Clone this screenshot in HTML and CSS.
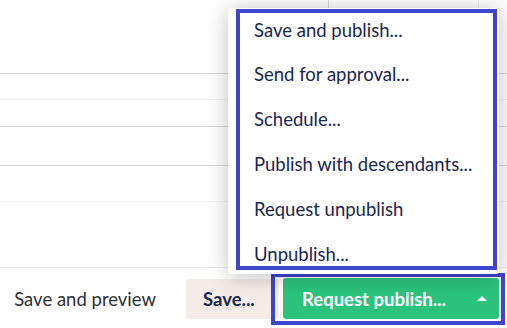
FILE: index.html
```html
<!DOCTYPE html>
<html lang="en">

<head>
    <meta charset="UTF-8">
    <meta name="viewport" content="width=device-width, initial-scale=1.0">
    <title>Publish options</title>
    <link rel="stylesheet" href="styles.css">
</head>

<body>
    <div class="page">
        <div class="content">
            <div class="row row-head">
                <div class="cell"></div>
                <div class="cell cell-mid"></div>
                <div class="cell cell-end"></div>
            </div>
            <div class="row row-a"></div>
            <div class="row row-b light"></div>
            <div class="row row-c"></div>
            <div class="row row-d"></div>
            <div class="row row-e light"></div>
        </div>

        <div class="footer">
            <button class="btn btn-link">Save and preview</button>
            <button class="btn btn-save">Save...</button>
            <div class="btn-group">
                <button class="btn btn-publish">
                    <span>Request publish...</span>
                    <span class="caret"></span>
                </button>
            </div>
        </div>

        <!-- menu abierto del boton de publicar -->
        <div class="dropdown">
            <ul class="dropdown-list">
                <li>Save and publish...</li>
                <li>Send for approval...</li>
                <li>Schedule...</li>
                <li>Publish with descendants...</li>
                <li>Request unpublish</li>
                <li>Unpublish...</li>
            </ul>
        </div>
    </div>
</body>

</html>
```

FILE: styles.css
```css
* {
    box-sizing: border-box;
}

body {
    margin: 0;
    font-family: Lato, "Open Sans", sans-serif;
    background: #fff;
    overflow: hidden;
}

.page {
    position: relative;
    width: 507px;
    height: 328px;
    display: flex;
    flex-direction: column;
}

.content {
    height: 267px;
}

.row {
    border-top: 1px solid #d8d7d9;
}

.row.light {
    border-top-color: #f2f2f3;
}

.row-head {
    height: 73px;
    border-top: none;
    display: grid;
    grid-template-columns: 328px 150px 1fr;
}

.cell-mid {
    border-left: 1px solid #d8d7d9;
}

.cell-end {
    border-left: 1px solid #ececee;
}

.row-a {
    height: 26px;
}

.row-b {
    height: 27px;
}

.row-c {
    height: 39px;
}

.row-d {
    height: 36px;
}

.row-e {
    height: 66px;
}

.footer {
    flex: 1;
    border-top: 1px solid #e9e9eb;
    display: flex;
    align-items: flex-start;
    justify-content: flex-end;
    padding: 5px 2px 0 0;
}

.btn {
    font-family: inherit;
    font-size: 18.5px;
    border: none;
    border-radius: 3px;
    height: 40px;
    cursor: pointer;
    white-space: nowrap;
}

.btn-link {
    background: none;
    color: #303033;
    padding: 0;
    margin: 6px 30px 0 0;
}

.btn-save {
    background: #f3ece8;
    color: #1b264f;
    font-weight: bold;
    padding: 0 0 0 17px;
    width: 93px;
    text-align: left;
    margin-top: 6px;
}

.btn-group {
    margin-left: -8px;
    border: 4px solid #3f45cc;
    padding: 1px 2px 2px 8px;
    position: relative;
}

.btn-publish {
    background: #2bc37c;
    color: #fff;
    font-weight: bold;
    width: 216px;
    height: 41px;
    display: flex;
    align-items: center;
    justify-content: space-between;
    padding: 0 12px 0 19px;
}

.caret {
    width: 0;
    height: 0;
    border-left: 5px solid transparent;
    border-right: 5px solid transparent;
    border-bottom: 5px solid #fff;
}

.dropdown {
    position: absolute;
    left: 228px;
    top: 8px;
    width: 271px;
    height: 266px;
    padding: 1px 2px 4px 8px;
    background: #fff;
    border-radius: 3px;
    box-shadow: 0 2px 22px rgba(0, 0, 0, 0.26);
}

.dropdown-list {
    height: 100%;
    margin: 0;
    padding: 0;
    list-style: none;
    border: 4px solid #3f45cc;
    overflow: hidden;
}

.dropdown-list li {
    color: #1b264f;
    font-size: 18.5px;
    height: 44.8px;
    line-height: 44.8px;
    padding-left: 14px;
    white-space: nowrap;
}

.dropdown-list li:first-child {
    margin-top: -5.4px;
}
```
